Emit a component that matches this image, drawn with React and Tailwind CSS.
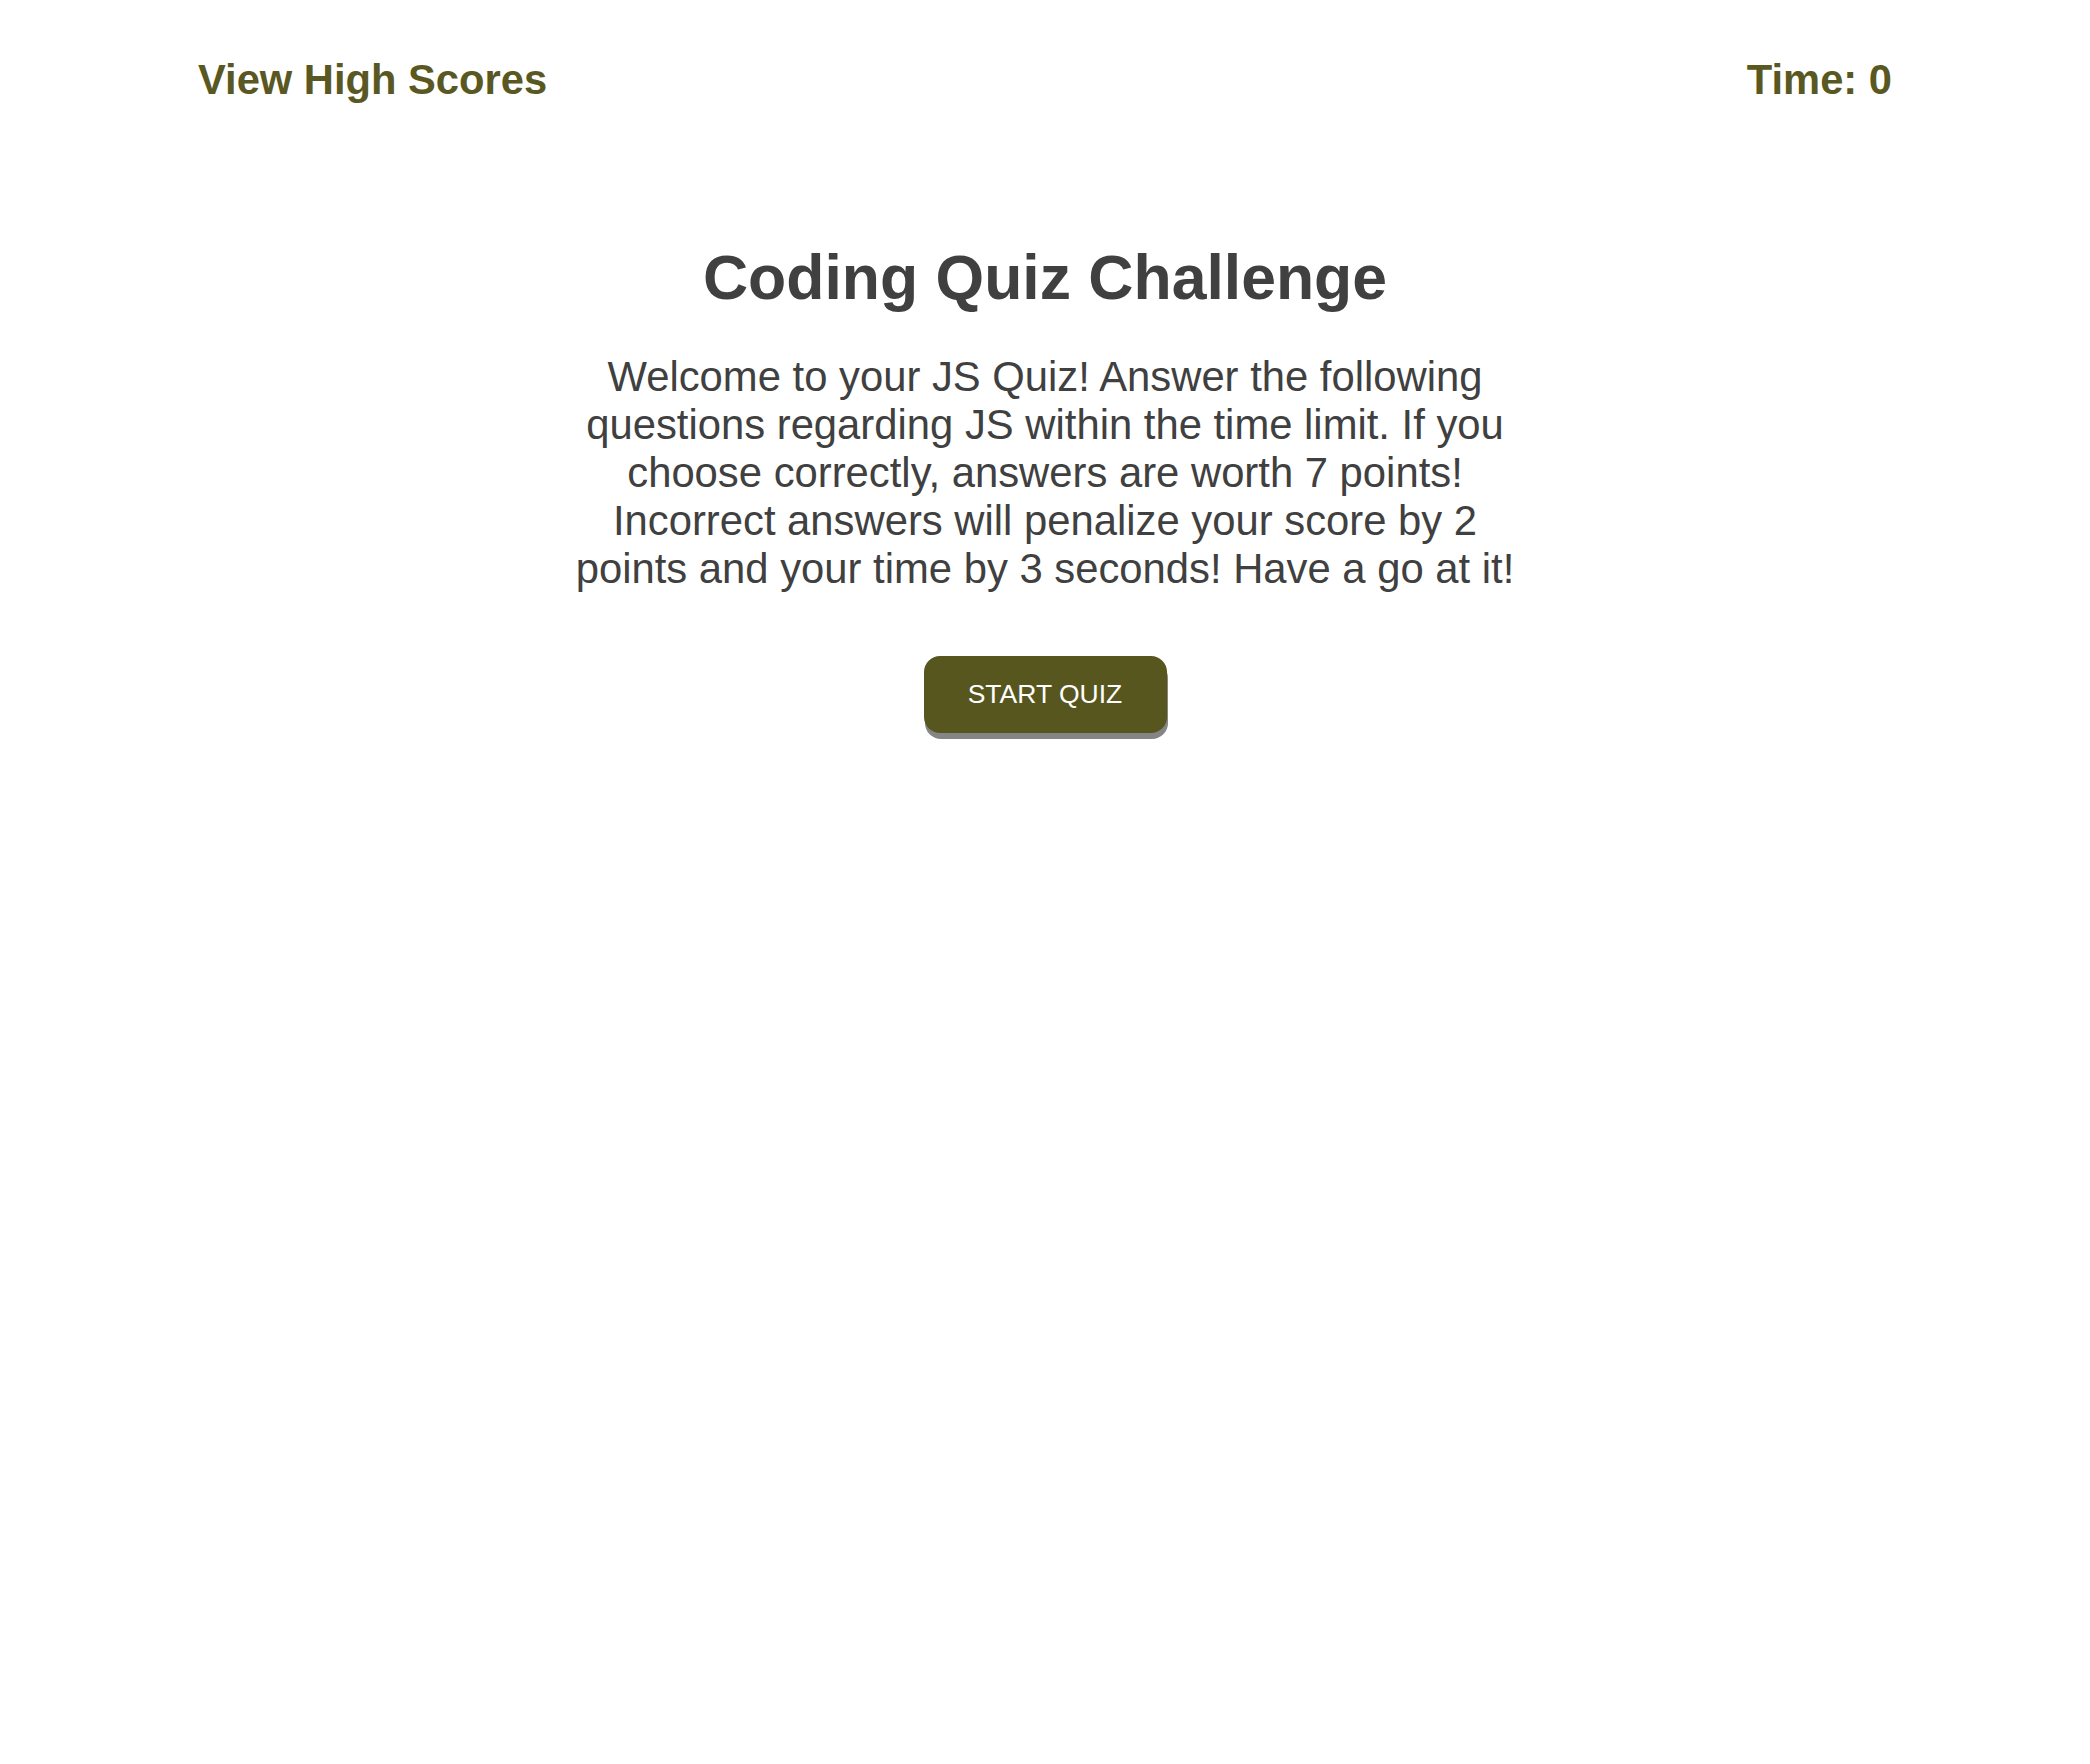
export default function App() {
  return (
    <div className="min-h-screen bg-white font-['Liberation_Sans',Arial,sans-serif]">
      {/* Header */}
      <header className="flex items-start justify-between px-[198px] pt-[56px] text-[41.7px] font-bold leading-[48px] text-[#5a5822]">
        <a href="#" className="hover:underline">View High Scores</a>
        <span>Time: 0</span>
      </header>

      {/* Intro */}
      <main className="flex flex-col items-center pt-[137px] text-[#404040]">
        <h1 className="text-[62.5px] font-bold leading-[72px]">Coding Quiz Challenge</h1>
        <p className="mt-[40px] w-[960px] text-center text-[41.8px] leading-[48px]">
          Welcome to your JS Quiz! Answer the following questions regarding JS within the time limit. If you choose
          correctly, answers are worth 7 points! Incorrect answers will penalize your score by 2 points and your time
          by 3 seconds! Have a go at it!
        </p>
        <button className="mt-[63px] flex h-[77px] w-[243px] items-center justify-center rounded-[16px] bg-[#58561f] text-[26.5px] text-white shadow-[1px_6px_0_#858585]">
          START QUIZ
        </button>
      </main>
    </div>
  );
}
